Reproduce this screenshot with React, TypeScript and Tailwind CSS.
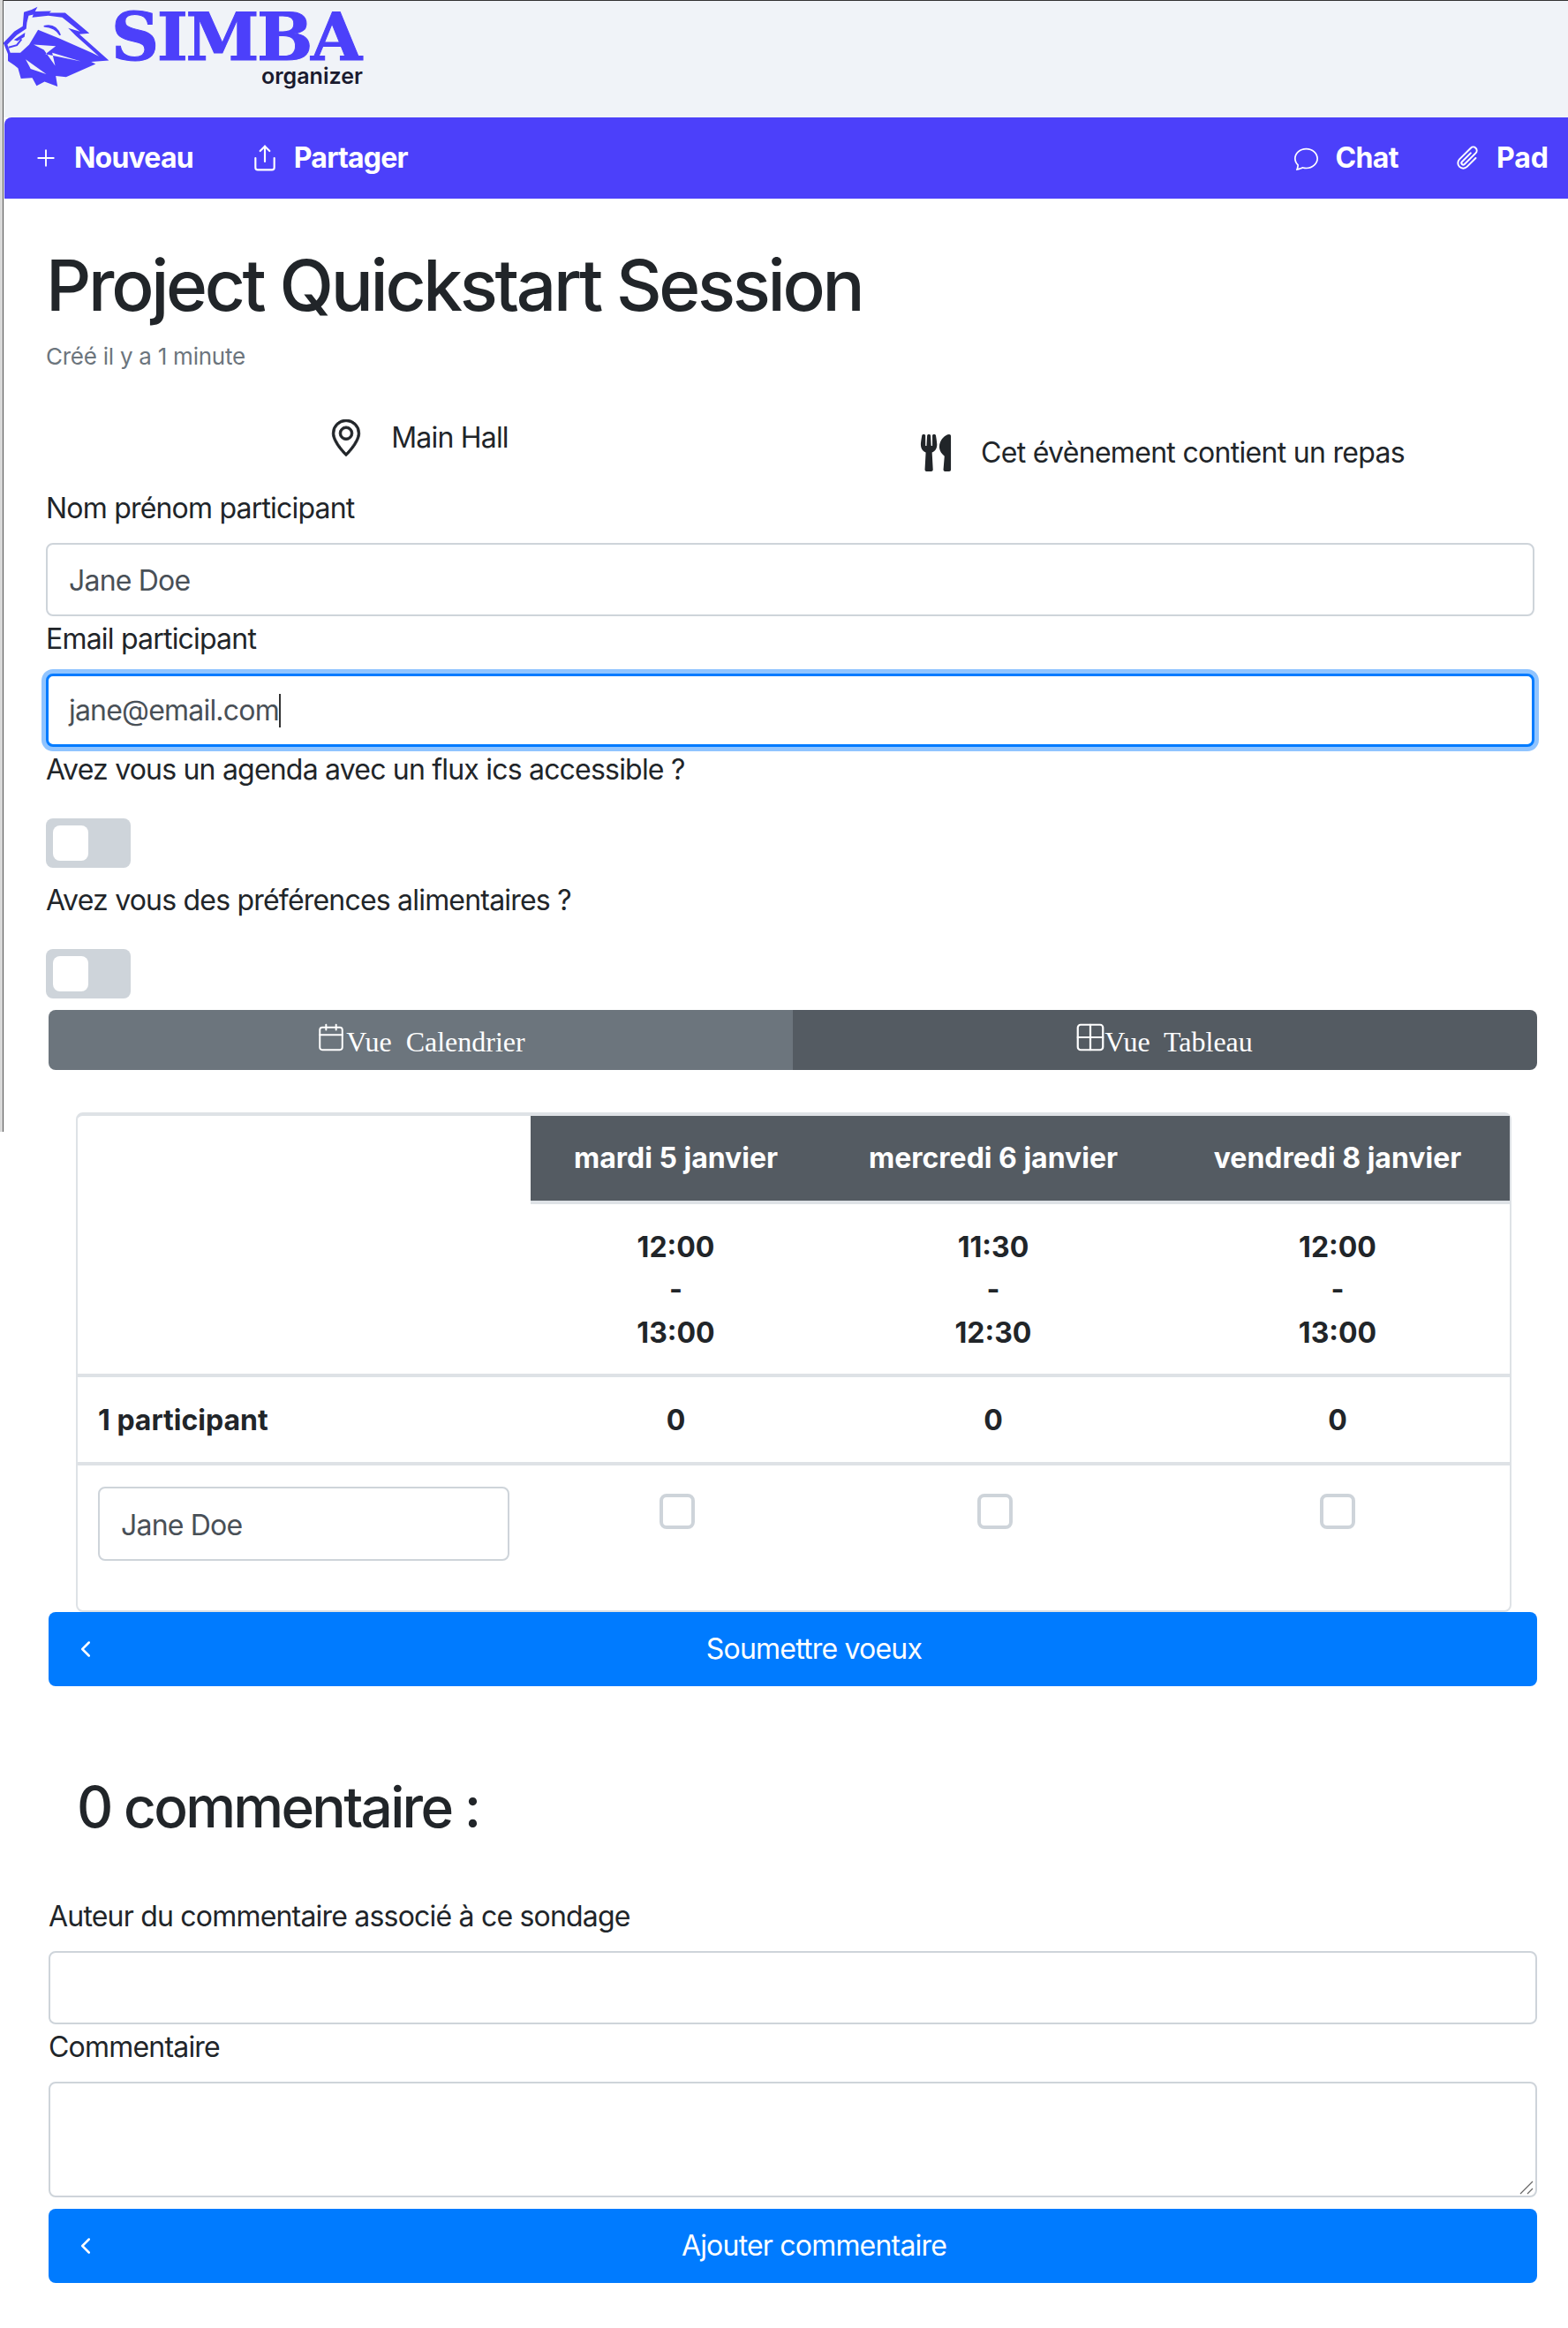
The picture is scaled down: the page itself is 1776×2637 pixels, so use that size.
import { BsChat, BsChevronLeft, BsGeoAlt, BsPaperclip } from 'react-icons/bs'
import { FaUtensils } from 'react-icons/fa'
import { Calendar, Grid2x2, Plus, Share } from 'lucide-react'

const slots = [
  { day: 'mardi 5 janvier', from: '12:00', to: '13:00' },
  { day: 'mercredi 6 janvier', from: '11:30', to: '12:30' },
  { day: 'vendredi 8 janvier', from: '12:00', to: '13:00' },
]

const inputClass = 'h-[83px] w-full rounded-lg border-2 border-[#ced4da] bg-white px-[24px] pt-[2px] text-[32px] text-[#495057] outline-none'
const gridCols = 'grid grid-cols-[513px_329px_390px_390px]'

function LionLogo() {
  return (
    <svg viewBox="10 20 362 275" className="h-[92px] w-[121px] shrink-0">
      <polygon
        fill="#4c40fa"
        points="12,145 50,105 78,88 82,40 108,32 128,22 120,38 175,36 168,42 222,42 304,112 270,115 370,204 310,208 325,216 225,260 190,256 196,292 152,276 125,290 110,262 118,262 72,265 62,230 50,220 28,205 28,182 15,150"
      />
      <polygon
        fill="#f0f3f8"
        points="92,76 98,52 114,48 110,58 165,52 212,58 272,106 232,94 258,120 336,190 312,178 200,128 130,100 100,150 70,178 36,178 26,150 58,118 90,96"
      />
      <polygon fill="#4c40fa" points="48,134 86,110 84,124 60,138" />
      <polyline points="30,160 58,152 74,132" fill="none" stroke="#4c40fa" strokeWidth="6" />
      <path d="M150 88 Q190 78 205 118 Q190 92 150 88Z" fill="#4c40fa" stroke="#4c40fa" strokeWidth="5" />
      <polygon fill="#f0f3f8" points="115,150 190,155 155,182 275,207 178,178 188,222 150,168" />
      <polygon fill="#f0f3f8" points="88,200 158,250 105,232" />
    </svg>
  )
}

function Field({ label, className = '', children }: { label: string; className?: string; children: React.ReactNode }) {
  return (
    <div className={className}>
      <label className="mb-[15px] block text-[32px] leading-[48px] text-[#212529]">{label}</label>
      {children}
    </div>
  )
}

function Toggle() {
  return (
    <div className="flex h-[56px] w-[96px] items-center rounded-lg bg-[#ced4da] pl-2">
      <div className="h-10 w-10 rounded-lg bg-white" />
    </div>
  )
}

function SubmitBar({ label }: { label: string }) {
  return (
    <button className="relative ml-[55px] flex h-[84px] w-[1686px] items-center justify-center rounded-lg bg-[#007bff] pl-[48px] text-[32px] text-white">
      <BsChevronLeft className="absolute left-[32px] h-[20px] w-[20px]" strokeWidth={1} />
      {label}
    </button>
  )
}

export default function App() {
  return (
    <div className="relative h-[2637px] w-[1776px] overflow-hidden bg-white font-['Inter',sans-serif] tracking-[-0.8px] text-[#212529]">
      <div className="absolute left-0 top-0 h-[1282px] w-[4px] border-r border-[#555555] bg-[#d9d9d9]" />

      <header className="flex h-[133px] items-start border-t border-[#333333] bg-[#f0f3f8] pl-[3px] pt-[6px]">
        <LionLogo />
        <div className="ml-[2px] flex flex-col items-end">
          <span className="mt-[2px] font-['DejaVu_Serif',serif] text-[75px] font-bold leading-[66px] tracking-[-2.4px] text-[#4c40fa] [-webkit-text-stroke:1px_#4c40fa]">SIMBA</span>
          <span className="-mr-[3px] -mt-[2px] text-[25px] font-semibold leading-[26px] tracking-normal text-[#1a1a2e]">organizer</span>
        </div>
      </header>

      <nav className="ml-[5px] flex h-[92px] items-center justify-between rounded-tl-lg bg-[#4c40fa] text-[32px] font-bold text-white">
        <div className="flex items-center">
          <Plus className="ml-[32px] h-[30px] w-[30px]" strokeWidth={1.5} />
          <span className="ml-[17px]">Nouveau</span>
          <Share className="ml-[65px] h-[32px] w-[32px]" strokeWidth={1.6} />
          <span className="ml-[17px]">Partager</span>
        </div>
        <div className="flex items-center">
          <BsChat className="h-[27px] w-[27px]" />
          <span className="ml-[19px] tracking-[-0.6px]">Chat</span>
          <BsPaperclip className="ml-[63px] h-[32px] w-[32px] rotate-45" />
          <span className="ml-[16px] mr-[22px] tracking-normal">Pad</span>
        </div>
      </nav>

      <section className="pl-[52px] pr-[38px]">
        <h1 className="mt-[48px] text-[80px] font-medium leading-[100px] tracking-[-3.3px]">Project Quickstart Session</h1>
        <p className="mt-[12px] text-[26px] leading-[38px] tracking-[-0.25px] text-[#6c757d]">Créé il y a 1 minute</p>

        <div className="mt-[49px] grid h-[65px] grid-cols-2">
          <div className="flex h-12 items-center justify-center">
            <BsGeoAlt className="h-[42px] w-[42px]" strokeWidth={0.3} />
            <span className="ml-[30px] text-[32px] leading-[48px]">Main Hall</span>
          </div>
          <div className="mt-[17px] flex h-12 items-center justify-center">
            <FaUtensils className="h-[42px] w-[36px]" />
            <span className="ml-[33px] text-[32px] leading-[48px] tracking-[-0.7px]">Cet évènement contient un repas</span>
          </div>
        </div>

        <Field label="Nom prénom participant" className="mt-[15px]">
          <input className={inputClass} defaultValue="Jane Doe" readOnly />
        </Field>

        <Field label="Email participant" className="mt-[2px]">
          <div className="flex h-[83px] w-full items-center rounded-lg border-[3px] border-[#007bff] bg-white px-[23px] text-[32px] text-[#495057] shadow-[0_0_0_5px_#90c4ff]">
            <span>jane@email.com</span>
            <span className="h-[38px] w-[2px] bg-[#333333]" />
          </div>
        </Field>

        <p className="mt-[2px] text-[32px] leading-[48px]">Avez vous un agenda avec un flux ics accessible ?</p>
        <div className="mt-[31px]">
          <Toggle />
        </div>
        <p className="mt-[13px] text-[32px] leading-[48px]">Avez vous des préférences alimentaires ?</p>
        <div className="mt-[31px]">
          <Toggle />
        </div>
      </section>

      <div className="ml-[55px] mt-[13px] grid h-[68px] w-[1686px] grid-cols-2 overflow-hidden rounded-lg font-['Liberation_Serif',serif] text-[32px] tracking-normal text-white">
        <div className="flex items-center justify-center bg-[#6c757d]">
          <Calendar className="mb-[6px] h-[34px] w-[34px]" strokeWidth={1.4} />
          <span className="mt-[3px] whitespace-pre">Vue  Calendrier</span>
        </div>
        <div className="flex items-center justify-center bg-[#545b62]">
          <Grid2x2 className="-mr-[3px] mb-[6px] h-[38px] w-[38px]" strokeWidth={1.4} />
          <span className="mr-[4px] mt-[3px] whitespace-pre">Vue  Tableau</span>
        </div>
      </div>

      <div className="ml-[86px] mt-[48px] h-[566px] w-[1626px] rounded-lg border-x-2 border-b-2 border-t-4 border-[#dee2e6] tracking-normal">
        <div className={gridCols}>
          <div />
          {slots.map(s => (
            <div key={s.day} className="flex h-[100px] items-center justify-center border-b-4 border-[#dee2e6] bg-[#545b62] text-[32px] font-bold text-white">
              {s.day}
            </div>
          ))}
        </div>
        <div className={`${gridCols} h-[196px] border-b-4 border-[#dee2e6]`}>
          <div />
          {slots.map(s => (
            <div key={s.day} className="flex flex-col items-center justify-center pt-[3px] text-[32px] font-bold leading-[48.5px]">
              <span>{s.from}</span>
              <span>-</span>
              <span>{s.to}</span>
            </div>
          ))}
        </div>
        <div className={`${gridCols} h-[100px] items-center border-b-4 border-[#dee2e6] pt-[2px] text-[32px] font-bold`}>
          <span className="pl-[23px]">1 participant</span>
          <span className="text-center">0</span>
          <span className="text-center">0</span>
          <span className="text-center">0</span>
        </div>
        <div className={`${gridCols} pt-6`}>
          <div className="pl-[23px]">
            <input className="h-[84px] w-[466px] rounded-lg border-2 border-[#ced4da] bg-white px-[24px] pt-[2px] text-[32px] tracking-[-0.8px] text-[#495057] outline-none" defaultValue="Jane Doe" readOnly />
          </div>
          {slots.map((s, i) => (
            <div key={s.day} className={`flex justify-center pt-2 ${i < 2 ? 'pl-[3px]' : ''}`}>
              <div className="h-10 w-10 rounded-lg border-4 border-[#ced4da] bg-white" />
            </div>
          ))}
        </div>
      </div>

      <SubmitBar label="Soumettre voeux" />

      <h2 className="ml-[87px] mt-[97px] text-[64px] font-medium leading-[80px] tracking-[-2.7px]">0 commentaire :</h2>

      <div className="ml-[55px] mt-[60px] w-[1686px]">
        <Field label="Auteur du commentaire associé à ce sondage">
          <input className={inputClass} readOnly />
        </Field>
        <Field label="Commentaire" className="mt-[2px]">
          <div className="relative">
            <textarea className="block h-[131px] w-full resize-none rounded-lg border-2 border-[#ced4da] bg-white outline-none" readOnly />
            {/* resize grip */}
            <svg viewBox="0 0 16 16" className="absolute bottom-[3px] right-[4px] h-4 w-4" stroke="#666666" strokeWidth="1.2">
              <path d="M1 15 15 1M9 15l6-6" />
            </svg>
          </div>
        </Field>
      </div>

      <div className="mt-[13px]">
        <SubmitBar label="Ajouter commentaire" />
      </div>
    </div>
  )
}
